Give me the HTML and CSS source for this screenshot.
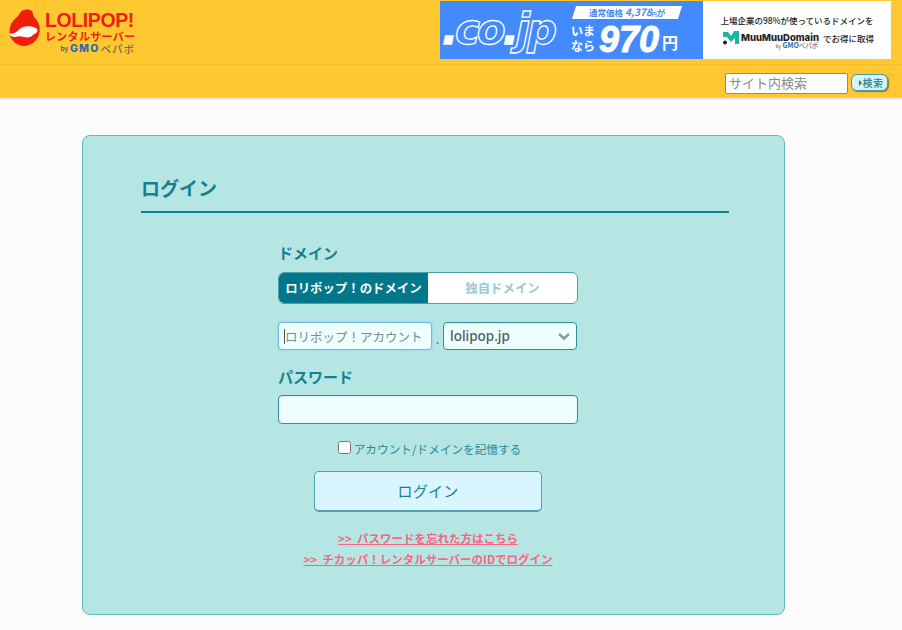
FILE: index.html
```html
<!DOCTYPE html>
<html lang="ja">
<head>
    <meta charset="UTF-8">
    <meta name="viewport" content="width=device-width, initial-scale=1.0">
    <title>ログイン</title>
    <link rel="stylesheet" href="styles.css">
</head>
<body>
    <header class="site-header">
        <div class="header-top">
            <a class="logo" href="#">
                <svg class="logo-mark" width="31" height="37" viewBox="0 0 31 37">
                    <path d="M17 .5C21 0 24 2 24 5C24 8 27 9 29 13C31 17 31.500 23 29 28C26 34 20 37 15 37C9 37 3 33 1 26C-.5 19 2 13 7 9C11 6 11 1 17 .5z" fill="#f01e0a"/>
                    <path d="M0 24.500C4 25 7 24 9 21.500C12 18 17 16.500 22 17.500C26 18 30 20 28 23C27 25 25 24.500 24 26C22 28.500 18 29 15 28C12 27 9 27 6 28C4 28.500 1 27 0 24.500z" fill="#fff"/>
                </svg>
                <div class="logo-text">
                    <div class="logo-name">LOLIPOP!</div>
                    <div class="logo-sub">レンタルサーバー</div>
                    <div class="logo-by"><small>by</small> <b>GMO</b><span>ペパボ</span></div>
                </div>
            </a>
            <div class="banners">
                <a class="banner-cojp" href="#">
                    <span class="cojp-name"><i>.</i>co<i>.</i>jp</span>
                    <div class="cojp-price">
                        <div class="cojp-normal"><span>通常価格 <i>4,378</i><small>円</small>が</span></div>
                        <div class="cojp-now">
                            <span class="cojp-imanara">いま<br>なら</span>
                            <span class="cojp-num">970</span>
                            <span class="cojp-yen">円</span>
                        </div>
                    </div>
                </a>
                <a class="banner-muumuu" href="#">
                    <div class="muumuu-lead">上場企業の98%が使っているドメインを</div>
                    <div class="muumuu-row">
                        <svg width="16" height="14" viewBox="0 0 16 14">
                            <path d="M0 1h5l3 4 3-5h5v13h-4V7L8 11 4 6H0z" fill="#17b8a0"/>
                            <circle cx="2" cy="11.500" r="2" fill="#222"/>
                        </svg>
                        <b>MuuMuuDomain</b>
                        <span>でお得に取得</span>
                    </div>
                    <div class="muumuu-by"><small>by</small> <b>GMO</b>ペパボ</div>
                </a>
            </div>
        </div>
        <form class="header-search">
            <input class="search-input" type="text" placeholder="サイト内検索">
            <button class="search-btn" type="button"><span class="search-arrow"></span>検索</button>
        </form>
    </header>

    <main class="content">
        <section class="login-card">
            <h1 class="login-title">ログイン</h1>
            <form class="login-form">
                <label class="field-label">ドメイン</label>
                <div class="domain-tabs">
                    <a class="domain-tab active" href="#">ロリポップ！のドメイン</a>
                    <a class="domain-tab" href="#">独自ドメイン</a>
                </div>
                <div class="account-row">
                    <div class="account-input">
                        <span class="caret"></span>
                        <span class="account-placeholder">ロリポップ！アカウント</span>
                    </div>
                    <span class="dot">.</span>
                    <div class="domain-select">
                        <span>lolipop.jp</span>
                        <svg width="14" height="9" viewBox="0 0 14 9"><path d="M2 2l5 4.500L12 2" fill="none" stroke="#8f9a9a" stroke-width="2.600"/></svg>
                    </div>
                </div>
                <label class="field-label password-label">パスワード</label>
                <input class="password-input" type="password">
                <label class="remember"><input type="checkbox">アカウント/ドメインを記憶する</label>
                <button class="login-btn" type="button">ログイン</button>
                <div class="login-links">
                    <a href="#">&gt;&gt;&nbsp; パスワードを忘れた方はこちら</a>
                    <a href="#">&gt;&gt;&nbsp; チカッパ！レンタルサーバーのIDでログイン</a>
                </div>
            </form>
        </section>
    </main>
</body>
</html>
```

FILE: styles.css
```css
* { box-sizing: border-box; }
html, body { height: 630px; overflow: hidden; }
body {
    margin: 0;
    background: #fcfcfc;
    font-family: "Noto Sans CJK JP", "Noto Sans", sans-serif;
    color: #16808f;
}
a { text-decoration: none; }

/* header */
.site-header {
    height: 98px;
    background: #ffc830;
    box-shadow: 0 1px 2px rgba(0, 0, 0, 0.15);
}
.header-top {
    height: 65px;
    border-bottom: 1px solid #f5bf2c;
    padding: 1px 11px 0 9px;
    display: flex;
    justify-content: space-between;
}
.logo { display: flex; gap: 5px; padding-top: 8px; }
.logo-text { width: 90px; }
.logo-name {
    font-family: "Liberation Sans", sans-serif;
    font-weight: 700;
    font-size: 19.500px;
    line-height: 18px;
    height: 18px;
    margin-top: 2px;
    color: #f01e0a;
    letter-spacing: -0.4px;
    white-space: nowrap;
}
.logo-sub {
    margin-top: 1px;
    font-size: 11px;
    line-height: 13px;
    font-weight: 700;
    color: #f01e0a;
    letter-spacing: 0.3px;
    white-space: nowrap;
}
.logo-by {
    display: flex;
    align-items: center;
    justify-content: flex-end;
    gap: 1px;
    height: 11px;
    font-size: 10.500px;
    line-height: 11px;
    font-weight: 500;
    letter-spacing: 1px;
    color: #6d6d5a;
    white-space: nowrap;
}
.logo-by small { font-size: 6.500px; color: #444; margin-right: 1px; letter-spacing: 0; }
.logo-by b {
    font-family: "Inter", sans-serif;
    font-size: 10.500px;
    font-weight: 800;
    letter-spacing: 1.200px;
    color: #2b6cb0;
}
.banners { display: flex; height: 58px; }
.banner-cojp {
    width: 263px;
    background: #448aff;
    color: #fff;
    display: flex;
    align-items: center;
    overflow: hidden;
}
.cojp-name {
    width: 130px;
    padding-left: 2px;
    font-family: "DejaVu Sans", sans-serif;
    font-size: 42px;
    font-weight: 700;
    font-style: italic;
    line-height: 52px;
    letter-spacing: -3px;
    color: #448aff;
    -webkit-text-stroke: 1.300px #fff;
    white-space: nowrap;
}
.cojp-name i { color: #fff; }
.cojp-price { width: 118px; margin-left: 1px; }
.cojp-normal {
    width: 106px;
    height: 13px;
    margin: 0 0 3px 3px;
    background: #fff;
    transform: skewX(-18deg);
    display: flex;
    justify-content: center;
    align-items: center;
}
.cojp-normal span {
    transform: skewX(18deg);
    color: #448aff;
    font-size: 8.500px;
    line-height: 13px;
    font-weight: 700;
    white-space: nowrap;
}
.cojp-normal i { font-size: 10px; }
.cojp-normal small { font-size: 5px; }
.cojp-now { display: flex; align-items: center; height: 32px; }
.cojp-imanara {
    width: 28px;
    font-size: 12px;
    font-weight: 700;
    line-height: 15px;
}
.cojp-num {
    padding-top: 3px;
    font-family: "Liberation Sans", sans-serif;
    font-size: 36px;
    font-weight: 700;
    font-style: italic;
    line-height: 32px;
    -webkit-text-stroke: 1px #fff;
}
.cojp-yen { font-size: 16px; font-weight: 700; line-height: 20px; margin-left: 3px; padding-top: 8px; }
.banner-muumuu {
    width: 188px;
    background: #fff;
    color: #222;
    padding-top: 13px;
    text-align: center;
    font-weight: 500;
}
.muumuu-lead { font-size: 8.500px; line-height: 13px; white-space: nowrap; }
.muumuu-row {
    display: flex;
    align-items: center;
    gap: 2px;
    margin: 3px 0 0 20px;
    height: 15px;
    font-size: 8.500px;
    white-space: nowrap;
}
.muumuu-row b {
    font-family: "Inter", sans-serif;
    font-size: 9.500px;
    font-weight: 800;
    margin-right: 2px;
}
.muumuu-by {
    margin-top: -3px;
    font-size: 6.500px;
    line-height: 7px;
    color: #777;
}
.muumuu-by b { color: #2b6cb0; font-size: 7px; }
.muumuu-by small { font-size: 4.500px; }

.header-search {
    height: 33px;
    padding: 8px 14px 0 0;
    display: flex;
    justify-content: flex-end;
    align-items: flex-start;
    gap: 3px;
}
.search-input {
    width: 123px;
    height: 21px;
    padding: 0 3px 2px;
    border: 1px solid #8b8b8b;
    border-radius: 2px;
    background: #fff;
    font-family: inherit;
    font-size: 13px;
    outline: none;
}
.search-input::placeholder { color: #8a8a8a; }
.search-btn {
    width: 37px;
    height: 17px;
    margin-top: 1px;
    padding: 0 0 0 3px;
    border: 1px solid #4a9aa5;
    border-radius: 6px;
    background: #d8f4f8;
    box-shadow: 1px 1px 1px #8a7a30;
    color: #1d7f8c;
    font-family: inherit;
    font-size: 10px;
    font-weight: 500;
    line-height: 14px;
    display: flex;
    align-items: center;
    justify-content: center;
    letter-spacing: 0.5px;
}
.search-arrow {
    width: 0;
    height: 0;
    margin-right: 1px;
    border-left: 3px solid #1d7f8c;
    border-top: 3px solid transparent;
    border-bottom: 3px solid transparent;
}

/* login card */
.content { padding: 37px 0 0 82px; }
.login-card {
    width: 703px;
    height: 480px;
    background: #b5e6e4;
    border: 1px solid #62b8bf;
    border-radius: 8px;
    padding: 38px 55px 0 58px;
}
.login-title {
    margin: 0;
    height: 39px;
    border-bottom: 2px solid #16808f;
    font-size: 19px;
    font-weight: 700;
    line-height: 28px;
    color: #16808f;
}
.login-form {
    width: 300px;
    margin: 30px 0 0 137px;
    display: flex;
    flex-direction: column;
}
.field-label {
    height: 20px;
    font-size: 15px;
    font-weight: 700;
    line-height: 20px;
    color: #16808f;
}
.domain-tabs {
    height: 32px;
    margin-top: 9px;
    display: flex;
    background: #fff;
    border: 1px solid #4c9fa9;
    border-radius: 6px;
    overflow: hidden;
}
.domain-tab {
    flex: 1;
    font-size: 12.400px;
    font-weight: 700;
    line-height: 30px;
    text-align: center;
    color: #9cc8d0;
    white-space: nowrap;
}
.domain-tab.active {
    flex: none;
    width: 149px;
    background: #00778a;
    color: #fff;
}
.account-row {
    margin-top: 18px;
    height: 28px;
    display: flex;
    align-items: stretch;
}
.account-input {
    width: 154px;
    background: #edfffe;
    border: 1px solid #6cb8e6;
    border-radius: 4px;
    box-shadow: 0 0 2px #6cc0f4;
    display: flex;
    align-items: center;
    padding-left: 5px;
    font-size: 12.500px;
    color: #7b8b8d;
    white-space: nowrap;
}
.caret { width: 1px; height: 15px; background: #555; }
.dot {
    width: 11px;
    text-align: center;
    font-size: 13px;
    line-height: 34px;
    color: #16808f;
}
.domain-select {
    width: 134px;
    background: #edfffe;
    border: 1px solid #2f8f9c;
    border-radius: 4px;
    display: flex;
    align-items: center;
    justify-content: space-between;
    padding: 0 5px 0 6px;
    font-family: "Noto Sans", sans-serif;
    font-size: 13.500px;
    font-weight: 500;
    color: #4b5c60;
}
.password-label { margin-top: 17px; }
.password-input {
    height: 29px;
    margin-top: 8px;
    background: #edfffe;
    border: 1px solid #2f8f9c;
    border-radius: 4px;
    box-shadow: inset 0 1px 2px rgba(0, 0, 0, 0.08);
    outline: none;
}
.remember {
    margin-top: 15px;
    height: 18px;
    padding-left: 3px;
    display: flex;
    align-items: center;
    justify-content: center;
    font-size: 11.650px;
    color: #27899a;
    white-space: nowrap;
}
.remember input {
    width: 13px;
    height: 13px;
    margin: 0 3px 2px 0;
}
.login-btn {
    width: 228px;
    height: 41px;
    margin: 14px 0 0 36px;
    padding: 0 0 2px;
    background: #d9f5ff;
    border: 1px solid #4da3b0;
    border-bottom-width: 2px;
    border-radius: 5px;
    color: #16808f;
    font-family: inherit;
    font-size: 15px;
    font-weight: 400;
    letter-spacing: 0.3px;
}
.login-links {
    margin-top: 17px;
    display: flex;
    flex-direction: column;
    align-items: center;
    gap: 3px;
}
.login-links a {
    font-size: 11.500px;
    line-height: 18px;
    font-weight: 700;
    color: #f8657f;
    text-decoration: underline;
    white-space: nowrap;
}
```
